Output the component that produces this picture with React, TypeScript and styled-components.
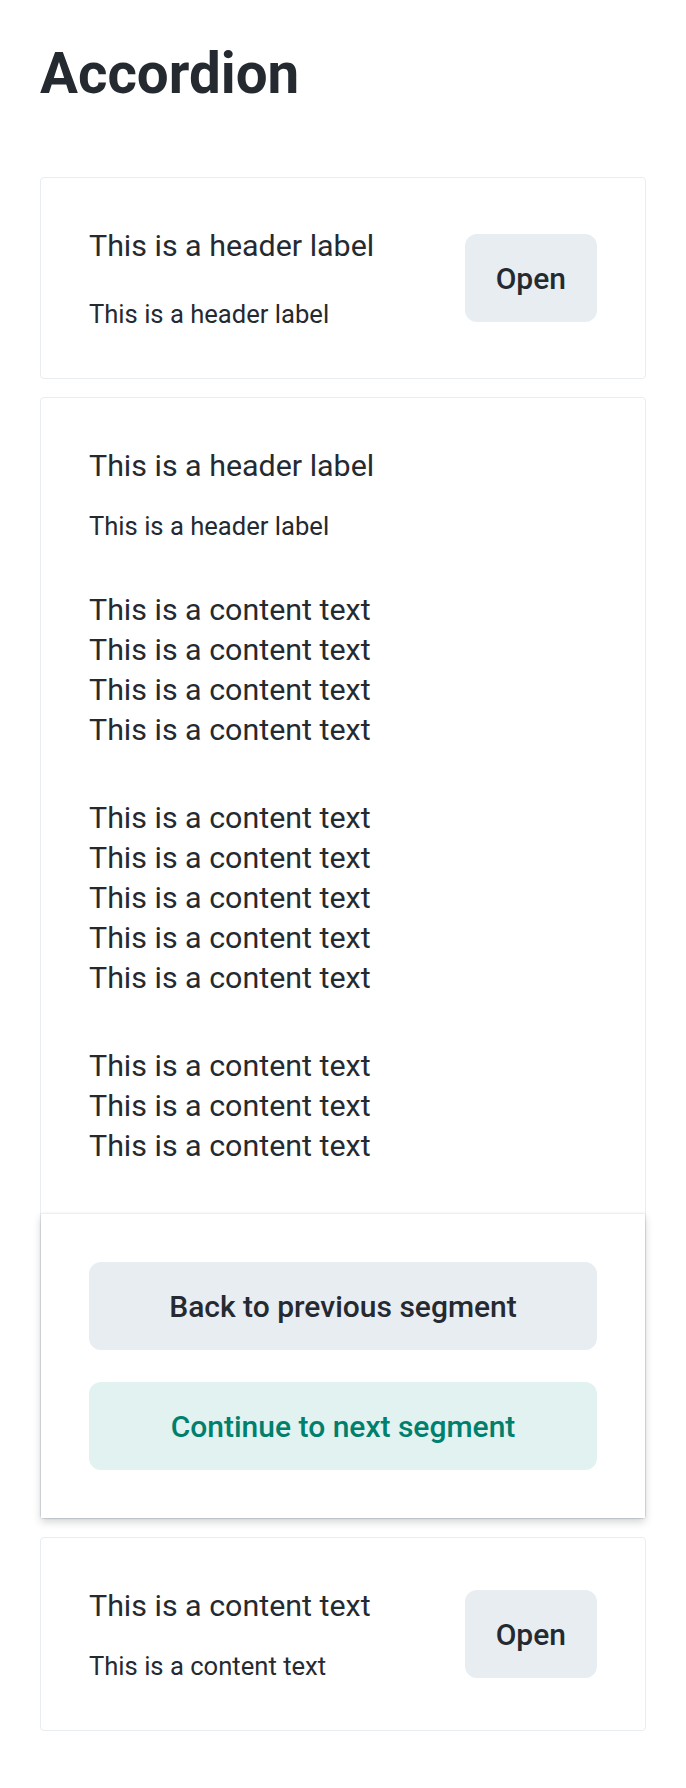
import React from "react";
import styled, { createGlobalStyle } from "styled-components";

const GlobalStyle = createGlobalStyle`
  html, body {
    margin: 0;
    padding: 0;
    background: #ffffff;
  }
  body {
    font-family: Roboto, "Liberation Sans", Arial, sans-serif;
    color: #252a31;
    -webkit-font-smoothing: antialiased;
  }
`;

const Page = styled.main`
  padding: 40px 40px 40px;
`;

const Title = styled.h1`
  margin: 0 0 69px;
  font-size: 56.5px;
  line-height: 68px;
  font-weight: 700;
  color: #252a31;
`;

const List = styled.div`
  display: flex;
  flex-direction: column;
  gap: 18px;
`;

const Card = styled.section`
  background: #ffffff;
  border: 1px solid #e8edf1;
  border-radius: 4px;
`;

const Header = styled.div`
  display: flex;
  align-items: center;
  justify-content: space-between;
  gap: 32px;
  padding: 48px;
`;

const Labels = styled.div<{ $gap: number }>`
  display: flex;
  flex-direction: column;
  gap: ${(p) => p.$gap}px;
`;

const Label = styled.div`
  font-size: 30.4px;
  line-height: 40px;
`;

const SubLabel = styled.div`
  font-size: 25.6px;
  line-height: 32px;
`;

const Content = styled.div`
  display: flex;
  flex-direction: column;
  gap: 48px;
  padding: 0 48px 48px;
`;

const Paragraph = styled.p`
  margin: 0;
  font-size: 30.4px;
  line-height: 40px;
`;

const Footer = styled.div`
  position: relative;
  display: flex;
  flex-direction: column;
  gap: 32px;
  padding: 48px;
  background: #ffffff;
  box-shadow: 0 0 2px 0 rgba(37, 42, 49, 0.16),
    0 4px 8px 0 rgba(37, 42, 49, 0.2);
`;

const Button = styled.button<{ $tone?: "secondary" | "primary"; $full?: boolean }>`
  flex-shrink: 0;
  height: 88px;
  padding: 0 31px;
  width: ${(p) => (p.$full ? "100%" : "auto")};
  border: none;
  border-radius: 12px;
  font-family: inherit;
  font-size: 30px;
  font-weight: 500;
  background: ${(p) => (p.$tone === "primary" ? "#e1f2f1" : "#e8edf1")};
  color: ${(p) => (p.$tone === "primary" ? "#007f6d" : "#252a31")};
  cursor: pointer;
`;

const contentGroups = [4, 5, 3];

export default function App() {
  return (
    <>
      <GlobalStyle />
      <Page>
        <Title>Accordion</Title>
        <List>
          <Card>
            <Header>
              <Labels $gap={32}>
                <Label>This is a header label</Label>
                <SubLabel>This is a header label</SubLabel>
              </Labels>
              <Button>Open</Button>
            </Header>
          </Card>

          <Card>
            <Header>
              <Labels $gap={24}>
                <Label>This is a header label</Label>
                <SubLabel>This is a header label</SubLabel>
              </Labels>
            </Header>
            <Content>
              {contentGroups.map((count, i) => (
                <Paragraph key={i}>
                  {Array.from({ length: count }).map((_, j) => (
                    <React.Fragment key={j}>
                      This is a content text
                      {j < count - 1 && <br />}
                    </React.Fragment>
                  ))}
                </Paragraph>
              ))}
            </Content>
            <Footer>
              <Button $full>Back to previous segment</Button>
              <Button $full $tone="primary">
                Continue to next segment
              </Button>
            </Footer>
          </Card>

          <Card>
            <Header>
              <Labels $gap={24}>
                <Label>This is a content text</Label>
                <SubLabel>This is a content text</SubLabel>
              </Labels>
              <Button>Open</Button>
            </Header>
          </Card>
        </List>
      </Page>
    </>
  );
}
